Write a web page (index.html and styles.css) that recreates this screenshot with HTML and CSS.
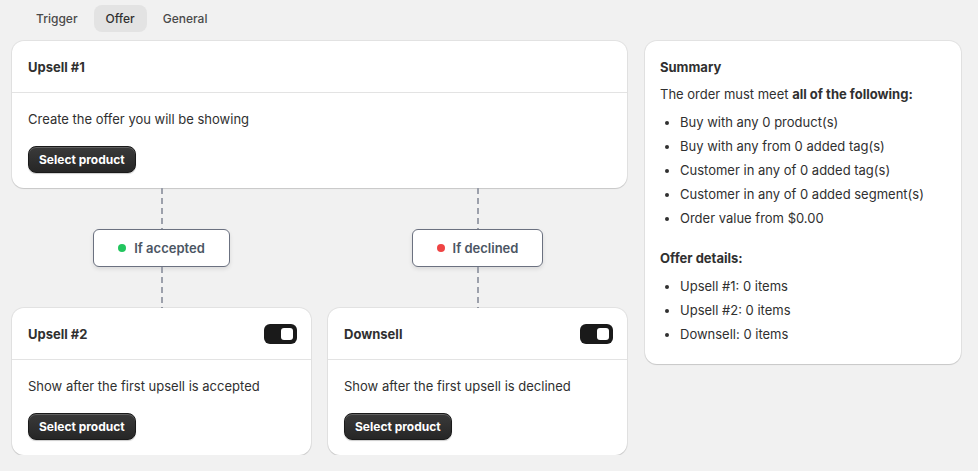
FILE: index.html
```html
<!DOCTYPE html>
<html lang="en">
<head>
    <meta charset="UTF-8">
    <meta name="viewport" content="width=device-width, initial-scale=1.0">
    <title>Offer</title>
    <link rel="stylesheet" href="styles.css">
</head>
<body>
    <div class="tabs">
        <button class="tab">Trigger</button>
        <button class="tab active">Offer</button>
        <button class="tab">General</button>
    </div>

    <div class="layout">
        <div class="flow">
            <div class="card">
                <div class="card-header">
                    <h2>Upsell #1</h2>
                </div>
                <div class="card-body">
                    <p>Create the offer you will be showing</p>
                    <button class="btn-primary">Select product</button>
                </div>
            </div>

            <div class="branches">
                <div class="branch">
                    <div class="dash"></div>
                    <div class="badge"><span class="dot green"></span>If accepted</div>
                    <div class="dash"></div>
                </div>
                <div class="branch">
                    <div class="dash"></div>
                    <div class="badge"><span class="dot red"></span>If declined</div>
                    <div class="dash"></div>
                </div>
            </div>

            <div class="branches">
                <div class="card">
                    <div class="card-header">
                        <h2>Upsell #2</h2>
                        <span class="toggle"></span>
                    </div>
                    <div class="card-body">
                        <p>Show after the first upsell is accepted</p>
                        <button class="btn-primary">Select product</button>
                    </div>
                </div>
                <div class="card">
                    <div class="card-header">
                        <h2>Downsell</h2>
                        <span class="toggle"></span>
                    </div>
                    <div class="card-body">
                        <p>Show after the first upsell is declined</p>
                        <button class="btn-primary">Select product</button>
                    </div>
                </div>
            </div>
        </div>

        <div class="card summary">
            <h2>Summary</h2>
            <p>The order must meet <strong>all of the following:</strong></p>
            <ul>
                <li>Buy with any 0 product(s)</li>
                <li>Buy with any from 0 added tag(s)</li>
                <li>Customer in any of 0 added tag(s)</li>
                <li>Customer in any of 0 added segment(s)</li>
                <li>Order value from $0.00</li>
            </ul>
            <h3>Offer details:</h3>
            <ul>
                <li>Upsell #1: 0 items</li>
                <li>Upsell #2: 0 items</li>
                <li>Downsell: 0 items</li>
            </ul>
        </div>
    </div>
</body>
</html>
```

FILE: styles.css
```css
body {
    font-family: Inter, "Noto Sans", sans-serif;
    font-size: 13px;
    line-height: 20px;
    color: #303030;
    margin: 0;
    padding: 5px 17px 0 12px;
    background-color: #f1f1f1;
}

.tabs {
    display: flex;
    gap: 4px;
    padding-left: 12px;
}

.tab {
    font-family: inherit;
    font-size: 12px;
    font-weight: 550;
    color: #4a4a4a;
    background: none;
    border: none;
    border-radius: 8px;
    height: 27px;
    padding: 0 12px;
    cursor: pointer;
}

.tab.active {
    background-color: #e3e3e3;
    color: #303030;
}

.layout {
    display: grid;
    grid-template-columns: 1fr 316px;
    gap: 18px;
    margin-top: 9px;
    align-items: start;
}

.card {
    background: white;
    border-radius: 12px;
    box-shadow: 0 0 0 1px rgba(0,0,0,0.06), 0 1px 1px rgba(0,0,0,0.12);
}

.card-header {
    display: flex;
    align-items: center;
    justify-content: space-between;
    height: 51px;
    padding: 0 14px 0 16px;
    border-bottom: 1px solid #e3e3e3;
}

h2 {
    font-size: 13px;
    font-weight: 650;
    margin: 0;
}

.card-body {
    padding: 16px 16px 15px;
}

.card-body p {
    margin: 0 0 17px;
}

.btn-primary {
    font-family: inherit;
    font-size: 12px;
    font-weight: 650;
    color: white;
    background: linear-gradient(#3a3a3a, #262626);
    border: 1px solid #1a1a1a;
    border-radius: 8px;
    height: 27px;
    padding: 0 10px;
    box-shadow: inset 0 1px 0 rgba(255,255,255,0.2), 0 1px 1px rgba(0,0,0,0.2);
    cursor: pointer;
}

.toggle {
    position: relative;
    width: 33px;
    height: 20px;
    background: #1a1a1a;
    border-radius: 6px;
}

.toggle::after {
    content: "";
    position: absolute;
    right: 4px;
    top: 4px;
    width: 12px;
    height: 12px;
    background: white;
    border-radius: 3px;
}

.branches {
    display: grid;
    grid-template-columns: 1fr 1fr;
    gap: 17px;
}

.branch {
    display: flex;
    flex-direction: column;
    align-items: center;
}

.dash {
    width: 2px;
    height: 41px;
    background: repeating-linear-gradient(#9ca0ab 0 6px, transparent 6px 10px);
}

.badge {
    display: flex;
    align-items: center;
    gap: 8px;
    height: 36px;
    padding: 0 24px;
    background: white;
    border: 1px solid #6b7180;
    border-radius: 6px;
    box-shadow: 0 2px 4px rgba(0,0,0,0.1);
    font-size: 13px;
    font-weight: 600;
    color: #4b5563;
}

.dot {
    width: 8px;
    height: 8px;
    border-radius: 50%;
}

.dot.green {
    background: #22c55e;
}

.dot.red {
    background: #ef4444;
}

.summary {
    padding: 16px 15px 20px;
}

.summary h2 {
    margin-bottom: 7px;
}

.summary p {
    margin: 0 0 8px;
}

.summary h3 {
    font-size: 13px;
    font-weight: 650;
    margin: 20px 0 8px;
}

.summary ul {
    margin: 0;
    padding-left: 20px;
}

.summary li + li {
    margin-top: 4px;
}
```
